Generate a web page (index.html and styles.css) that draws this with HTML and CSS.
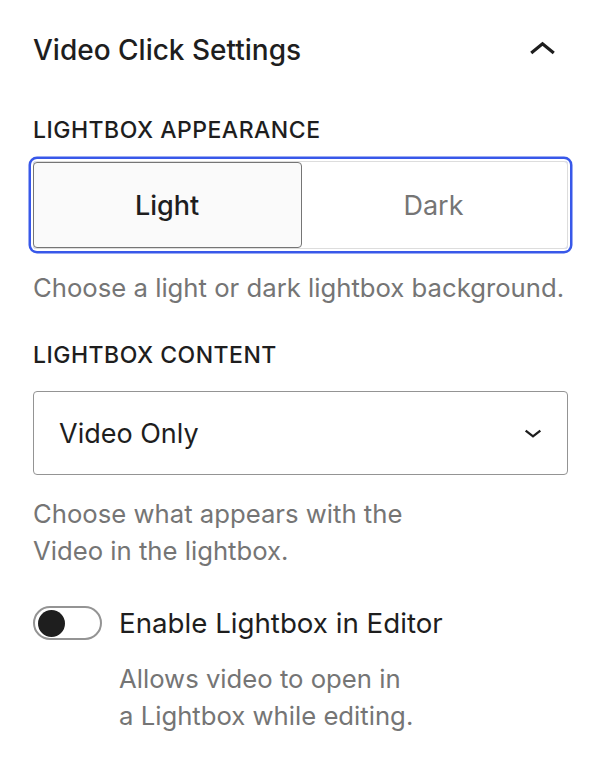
FILE: index.html
```html
<!DOCTYPE html>
<html lang="en">
<head>
  <meta charset="UTF-8" />
  <meta name="viewport" content="width=device-width, initial-scale=1" />
  <title>Video Click Settings</title>
  <link rel="stylesheet" href="styles.css">
</head>
<body>
  <div class="panel">
    <div class="panel-header">
      <h2>Video Click Settings</h2>
      <svg class="toggle-icon" viewBox="0 0 24 24" width="53" height="53">
        <path d="M6.9 13.1 12 9l5.1 4.1" fill="none" stroke="#1e1e1e" stroke-width="1.45" />
      </svg>
    </div>

    <div class="field-label label-appearance">Lightbox Appearance</div>
    <div class="segmented">
      <button class="seg-btn active">Light</button>
      <button class="seg-btn">Dark</button>
    </div>
    <p class="help help-appearance">Choose a light or dark lightbox background.</p>

    <div class="field-label label-content">Lightbox Content</div>
    <div class="select">
      <span>Video Only</span>
      <svg viewBox="0 0 24 24" width="40" height="40">
        <path d="M7.6 10.6 12 14l4.4-3.4" fill="none" stroke="#1e1e1e" stroke-width="1.4" />
      </svg>
    </div>
    <p class="help help-content">Choose what appears with the<br>Video in the lightbox.</p>

    <div class="switch-row">
      <span class="switch"><span class="knob"></span></span>
      <span class="switch-label">Enable Lightbox in Editor</span>
    </div>
    <p class="help help-switch">Allows video to open in<br>a Lightbox while editing.</p>
  </div>
</body>
</html>
```

FILE: styles.css
```css
html, body {
  margin: 0;
  padding: 0;
  background: #fff;
  font-family: Inter, "Noto Sans", sans-serif;
  color: #1e1e1e;
}

.panel {
  padding: 24px 32px 0 33px;
}

.panel-header {
  display: flex;
  justify-content: space-between;
  align-items: center;
  height: 53px;
}

.panel-header h2 {
  margin: 0;
  font-size: 28px;
  font-weight: 500;
  line-height: 53px;
}

.toggle-icon {
  margin-right: -1px;
}

.field-label {
  font-size: 23px;
  font-weight: 500;
  line-height: 30px;
  letter-spacing: 0.5px;
  text-transform: uppercase;
}

.label-appearance {
  margin-top: 38px;
}

.label-content {
  margin-top: 34px;
}

.segmented {
  display: flex;
  height: 88px;
  margin-top: 16px;
  box-sizing: border-box;
  border: 1.5px solid #ddd;
  border-radius: 4px;
  box-shadow: 0 0 0 2px #fff, 0 0 0 4.5px #3858e9;
}

.seg-btn {
  flex: 1;
  margin: 0 0 0 -1.5px;
  border: none;
  background: transparent;
  font-family: inherit;
  font-size: 27px;
  color: #757575;
  padding: 0;
}

.seg-btn.active {
  border: 1.5px solid #757575;
  border-radius: 4px;
  background: #fafafa;
  color: #1e1e1e;
  font-weight: 500;
}

.help {
  margin: 20px 0 0;
  font-size: 25.7px;
  line-height: 37px;
  color: #757575;
}

.select {
  display: flex;
  justify-content: space-between;
  align-items: center;
  height: 84px;
  margin-top: 21px;
  box-sizing: border-box;
  padding: 0 14px 0 25px;
  border: 1.5px solid #949494;
  border-radius: 4px;
  font-size: 27px;
}

.switch-row {
  display: flex;
  align-items: center;
  gap: 17px;
  margin-top: 37px;
}

.switch {
  display: flex;
  align-items: center;
  width: 69px;
  height: 34px;
  box-sizing: border-box;
  padding: 0 3px;
  border: 2px solid #949494;
  border-radius: 17px;
}

.knob {
  width: 27px;
  height: 27px;
  border-radius: 50%;
  background: #1e1e1e;
}

.switch-label {
  font-size: 27.7px;
}

.help-switch {
  margin-left: 86px;
}
```
